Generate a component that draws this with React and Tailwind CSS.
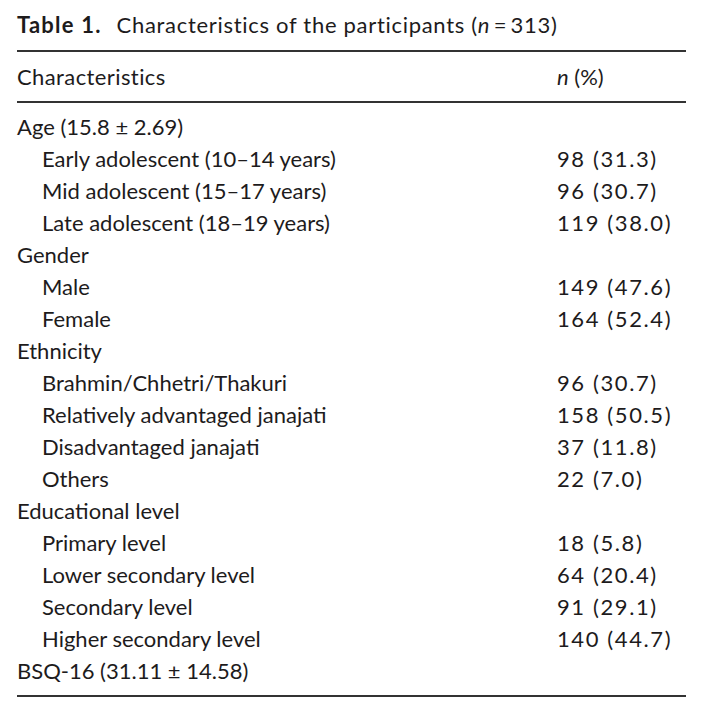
import React from "react";

const rows = [
  { label: "Age (15.8 ± 2.69)", value: "", indent: false },
  { label: "Early adolescent (10–14 years)", value: "98 (31.3)", indent: true },
  { label: "Mid adolescent (15–17 years)", value: "96 (30.7)", indent: true },
  { label: "Late adolescent (18–19 years)", value: "119 (38.0)", indent: true },
  { label: "Gender", value: "", indent: false },
  { label: "Male", value: "149 (47.6)", indent: true },
  { label: "Female", value: "164 (52.4)", indent: true },
  { label: "Ethnicity", value: "", indent: false },
  { label: "Brahmin/Chhetri/Thakuri", value: "96 (30.7)", indent: true },
  { label: "Relatively advantaged janajati", value: "158 (50.5)", indent: true },
  { label: "Disadvantaged janajati", value: "37 (11.8)", indent: true },
  { label: "Others", value: "22 (7.0)", indent: true },
  { label: "Educational level", value: "", indent: false },
  { label: "Primary level", value: "18 (5.8)", indent: true },
  { label: "Lower secondary level", value: "64 (20.4)", indent: true },
  { label: "Secondary level", value: "91 (29.1)", indent: true },
  { label: "Higher secondary level", value: "140 (44.7)", indent: true },
  { label: "BSQ-16 (31.11 ± 14.58)", value: "", indent: false },
];

export default function App() {
  return (
    <div
      className="w-[703px] h-[716px] bg-white text-[#1d1b1c] pl-[17px] pr-[17px]"
      style={{ fontFamily: "Lato, 'Open Sans', sans-serif" }}
    >
      <div className="h-[50px] flex items-center text-[22px] leading-none pb-[1px] whitespace-nowrap">
        <span className="font-bold tracking-[1.2px]">Table 1.</span>
        <span className="ml-[15px] tracking-[0.7px]">
          Characteristics of the participants (<i>n</i>{"\u2009=\u2009"}313)
        </span>
      </div>
      <div className="h-[2px] bg-[#333]" />
      <div className="h-[49px] flex items-center text-[22px]">
        <div className="flex-1 tracking-[0.4px]">Characteristics</div>
        <div className="w-[129px]">
          <i>n</i> (%)
        </div>
      </div>
      <div className="h-[2px] bg-[#333]" />
      <div className="pt-[7px] pb-[9px]">
        {rows.map((r, i) => (
          <div key={i} className="h-[32px] flex items-center text-[22px] whitespace-nowrap">
            <div className={r.indent ? "flex-1 pl-[25px]" : "flex-1"}>{r.label}</div>
            <div className="w-[129px] tracking-[1.6px]">{r.value}</div>
          </div>
        ))}
      </div>
      <div className="h-[2px] bg-[#333]" />
    </div>
  );
}
